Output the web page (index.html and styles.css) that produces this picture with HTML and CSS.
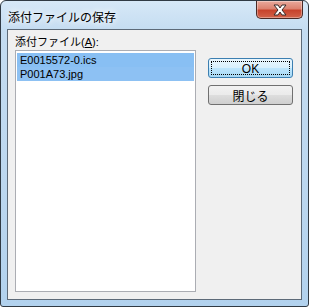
FILE: index.html
```html
<!DOCTYPE html>
<html lang="ja">
<head>
  <meta charset="UTF-8">
  <title>添付ファイルの保存</title>
  <link rel="stylesheet" href="styles.css">
</head>
<body>

  <div class="ventana">
    <div class="titulo">
      <span class="titulo-texto">添付ファイルの保存</span>
      <div class="cerrar">
        <svg width="16" height="12" viewBox="0 0 16 12">
          <path d="M2 1h4l2 3 2-3h4l-4 5 4 5h-4l-2-3-2 3H2l4-5z" fill="#fff" stroke="#3a2a28" stroke-width="1"/>
        </svg>
      </div>
    </div>

    <div class="cliente">
      <div class="columna">
        <label class="etiqueta">添付ファイル(<u>A</u>):</label>
        <div class="lista">
          <div class="item sel">E0015572-0.ics</div>
          <div class="item sel">P001A73.jpg</div>
        </div>
      </div>
      <div class="botones">
        <button class="boton ok"><span>OK</span></button>
        <button class="boton">閉じる</button>
      </div>
    </div>
  </div>

</body>
</html>
```
FILE: styles.css
```css
body { margin: 0; font-family: "Liberation Sans", "Noto Sans CJK JP", sans-serif; font-size: 12px; }

.ventana {
  width: 309px; height: 307px; box-sizing: border-box;
  border: 1px solid #303a44; border-radius: 6px 6px 3px 3px;
  background: linear-gradient(180deg, #d6e8f7 0%, #c4dcf1 10%, #bcd7ef 60%, #b2d2ee 100%);
  display: flex; flex-direction: column;
  padding: 0 6px 6px 6px;
}

.titulo { height: 28px; display: flex; justify-content: space-between; align-items: flex-start; }
.titulo-texto {
  margin-top: 7px; margin-left: 1px; font-size: 12px; color: #000;
  text-shadow: 0 0 6px #fff, 0 0 8px #fff;
}
.cerrar {
  width: 47px; height: 18px; margin-right: -1px; box-sizing: border-box;
  border: 1px solid #4a2a26; border-top: none; border-radius: 0 0 5px 5px;
  background: linear-gradient(180deg, #e9a99c 0%, #dc8270 45%, #c7432c 55%, #d2634a 100%);
  display: flex; align-items: center; justify-content: center;
  box-shadow: inset 0 0 0 1px rgba(255,255,255,0.35);
}

.cliente {
  flex: 1; background: #f0f0f0; border: 1px solid #5d6a78;
  display: flex; padding: 6px 0 7px 7px;
}

.columna { width: 181px; display: flex; flex-direction: column; }
.etiqueta { height: 14px; font-size: 11px; line-height: 13px; }
.etiqueta u { text-decoration: underline; }

.lista {
  flex: 1; margin-top: 0; background: #fff; border: 1px solid #abadb3;
  padding: 2px 1px;
}
.item { height: 14px; line-height: 14px; font-size: 11px; padding-left: 3px; }
.item.sel { background: #99c9f5; }
.item.sel:first-child { background: #88bff3; }
.item.sel { background: #8dc1f3; }

.botones { display: flex; flex-direction: column; margin-left: 12px; margin-top: 22px; gap: 7px; }
.boton {
  width: 85px; height: 20px; padding: 0; font-family: inherit; font-size: 12px;
  border: 1px solid #707070; border-radius: 3px; color: #000;
  background: linear-gradient(180deg, #f2f2f2 0%, #ebebeb 48%, #dddddd 52%, #cfcfcf 100%);
}
.boton.ok {
  border-color: #3c7fb1; padding: 2px;
  background: linear-gradient(180deg, #eaf6fd 0%, #d9f0fc 48%, #bee6fd 52%, #a7d9f5 100%);
}
.boton.ok span {
  display: block; height: 100%; box-sizing: border-box; line-height: 14px;
  border: 1px dotted #000;
}
```
